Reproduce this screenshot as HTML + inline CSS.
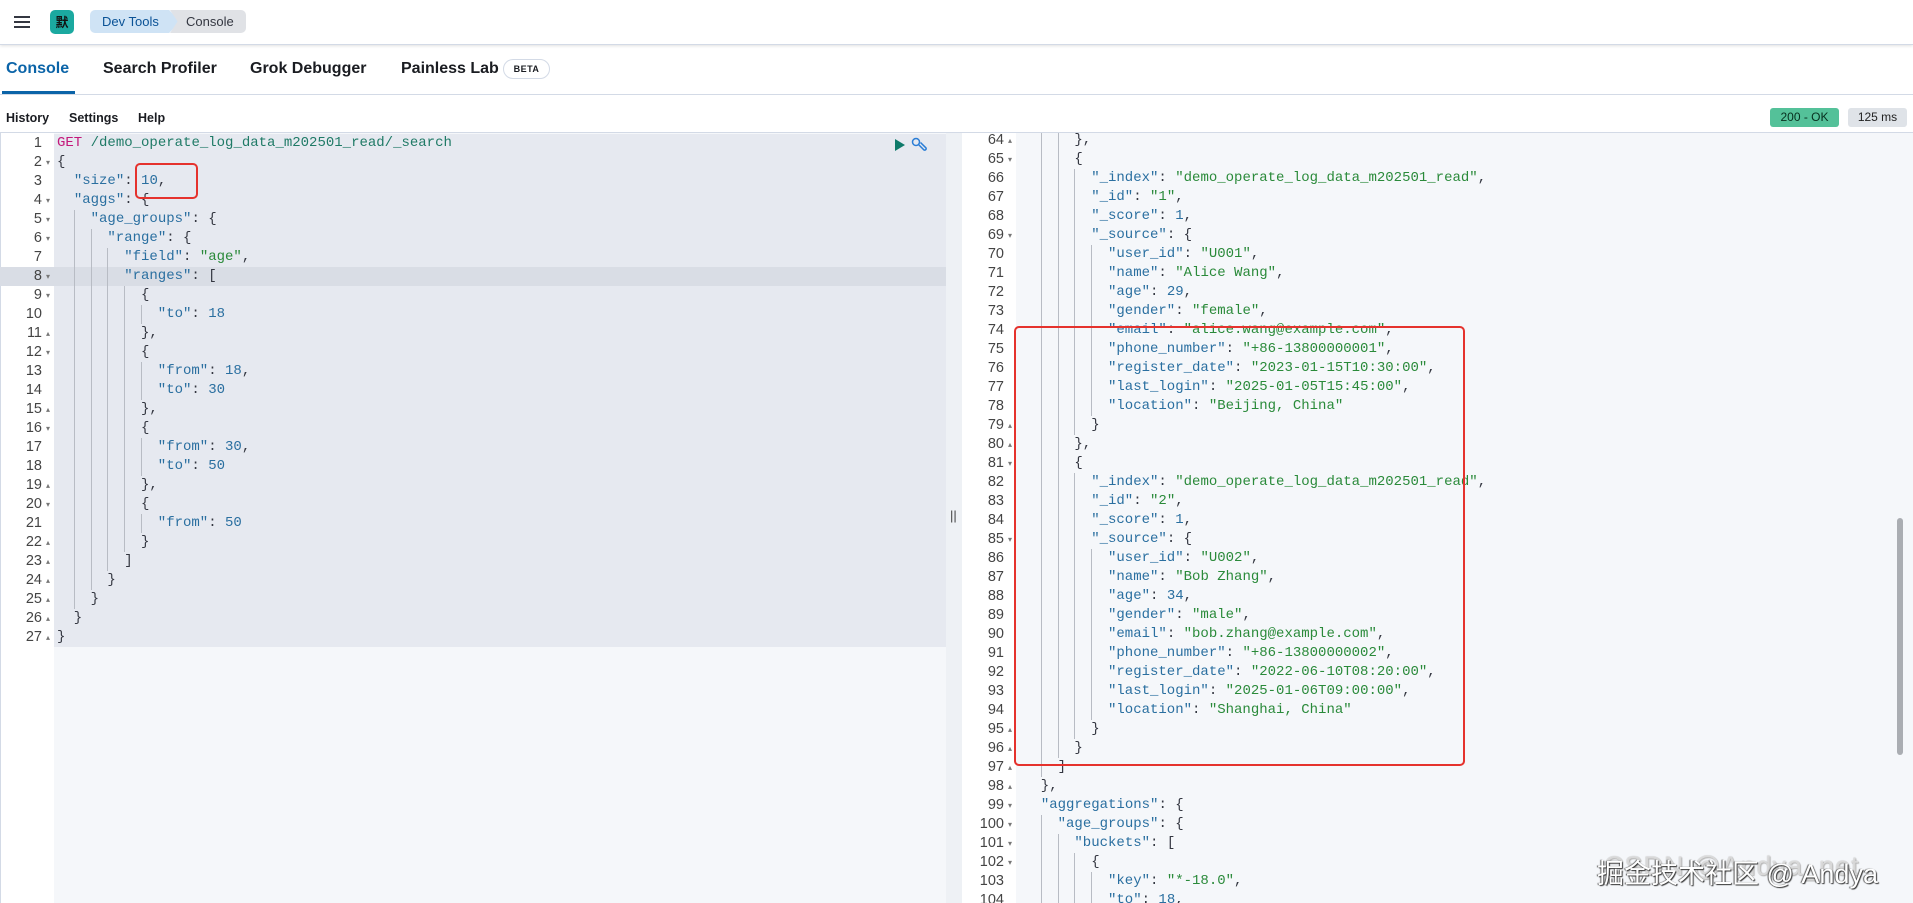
<!DOCTYPE html>
<html><head><meta charset="utf-8">
<style>
*{box-sizing:border-box;margin:0;padding:0}
html,body{width:1913px;height:903px;overflow:hidden;background:#fff;font-family:"Liberation Sans",sans-serif;color:#1a1c21;position:relative}
.hdr{position:absolute;left:0;top:0;width:1913px;height:45px;background:#fff;border-bottom:1px solid #d3dae6;box-shadow:0 1px 3px rgba(0,0,0,.12)}
.burger{position:absolute;left:14px;top:16px;width:16px;height:13px}
.burger span{position:absolute;left:0;width:16px;height:2px;background:#343741}
.logo{position:absolute;left:50px;top:10px;width:24px;height:24px;border-radius:5px;background:#1ba9a0;color:#111;font:bold 13px "Noto Sans CJK SC",sans-serif;text-align:center;line-height:24px}
.bc1{position:absolute;left:90px;top:10px;height:23px;width:90px;background:#cfe3f5;color:#0a5296;font-size:13px;line-height:23px;padding-left:12px;border-radius:5px 0 0 5px;clip-path:polygon(0 0,88% 0,100% 50%,88% 100%,0 100%)}
.bc2{position:absolute;left:170px;top:10px;height:23px;width:76px;background:#e0e2e6;color:#343741;font-size:13px;line-height:23px;padding-left:16px;border-radius:0 5px 5px 0;clip-path:polygon(0 0,100% 0,100% 100%,0 100%,10% 50%)}
.tabs{position:absolute;left:0;top:46px;width:1913px;height:49px;border-bottom:1px solid #d3dae6}
.tab{position:absolute;top:14px;font-weight:bold;font-size:16px;color:#1a1c21}
.tab.on{color:#0b64a8}
.uline{position:absolute;left:2px;top:45px;width:73px;height:3px;background:#0b64a8}
.beta{position:absolute;left:503px;top:13px;width:47px;height:20px;border:1px solid #d3dae6;border-radius:10px;font-size:9px;font-weight:bold;text-align:center;line-height:18px;letter-spacing:.5px}
.menu{position:absolute;top:111px;font-size:12.5px;font-weight:bold}
.badge{position:absolute;top:108px;height:19px;font-size:12px;line-height:19px;text-align:center;border-radius:3px}
.ed{position:absolute;top:133px;height:770px;overflow:hidden;font-family:"Liberation Mono",monospace;font-size:14px}
.ln{height:19px;line-height:19px;white-space:pre;position:relative}
.g{position:absolute;left:0;width:53px;text-align:right;padding-right:11px;color:#444;font-family:"Liberation Sans",sans-serif;font-size:14.5px}
.g b{position:absolute;right:3px;top:0;font-size:8px;color:#777;font-weight:normal}
.c{position:absolute;white-space:pre;color:#343741}
i{display:inline-block;width:16.8px;height:19px;border-left:1px solid #b8bcc4;vertical-align:top}
.k{color:#2a6fa0}.s{color:#2a8a3a}.n{color:#2a6fa0}.m{color:#c4177a}.u{color:#1f7a66}
.red{position:absolute;border:2px solid #e5322d;border-radius:5px}
</style></head><body>
<div class="hdr">
 <div class="burger"><span style="top:0"></span><span style="top:5px"></span><span style="top:10px"></span></div>
 <div class="logo">默</div>
 <div class="bc1">Dev Tools</div>
 <div class="bc2">Console</div>
</div>
<div class="tabs">
 <div class="tab on" style="left:6px">Console</div>
 <div class="tab" style="left:103px">Search Profiler</div>
 <div class="tab" style="left:250px">Grok Debugger</div>
 <div class="tab" style="left:401px">Painless Lab</div>
 <div class="beta">BETA</div>
 <div class="uline"></div>
</div>
<div class="menu" style="left:6px">History</div>
<div class="menu" style="left:69px">Settings</div>
<div class="menu" style="left:138px">Help</div>
<div class="badge" style="left:1770px;width:69px;background:#54c199;color:#07301f">200 - OK</div>
<div class="badge" style="left:1848px;width:59px;background:#dfe3e8;color:#222">125 ms</div>
<div style="position:absolute;left:0;top:132px;width:1913px;height:1px;background:#d3dae6"></div>

<!-- LEFT EDITOR -->
<div class="ed" style="left:0;width:946px;background:#f5f7fa">
 <div style="position:absolute;left:0;top:0;width:54px;height:770px;background:#fff;border-left:1px solid #d3dae6"></div>
 <div style="position:absolute;left:54px;top:1px;width:892px;height:513px;background:#e6e9f0"></div>
 <div style="position:absolute;left:0;top:134px;width:946px;height:19px;background:#d9dde5"></div>
 <div style="position:absolute;top:1px;left:0;width:946px">
<div class="ln"><span class="g">1</span><span class="c" style="left:57px"><span class="m">GET</span> <span class="u">/demo_operate_log_data_m202501_read/_search</span></span></div>
<div class="ln"><span class="g">2<b>▾</b></span><span class="c" style="left:57px">{</span></div>
<div class="ln"><span class="g">3</span><span class="c" style="left:57px">  <span class="k">"size"</span>: <span class="n">10</span>,</span></div>
<div class="ln"><span class="g">4<b>▾</b></span><span class="c" style="left:57px">  <span class="k">"aggs"</span>: {</span></div>
<div class="ln"><span class="g">5<b>▾</b></span><span class="c" style="left:57px">  <i></i><span class="k">"age_groups"</span>: {</span></div>
<div class="ln"><span class="g">6<b>▾</b></span><span class="c" style="left:57px">  <i></i><i></i><span class="k">"range"</span>: {</span></div>
<div class="ln"><span class="g">7</span><span class="c" style="left:57px">  <i></i><i></i><i></i><span class="k">"field"</span>: <span class="s">"age"</span>,</span></div>
<div class="ln"><span class="g">8<b>▾</b></span><span class="c" style="left:57px">  <i></i><i></i><i></i><span class="k">"ranges"</span>: [</span></div>
<div class="ln"><span class="g">9<b>▾</b></span><span class="c" style="left:57px">  <i></i><i></i><i></i><i></i>{</span></div>
<div class="ln"><span class="g">10</span><span class="c" style="left:57px">  <i></i><i></i><i></i><i></i><i></i><span class="k">"to"</span>: <span class="n">18</span></span></div>
<div class="ln"><span class="g">11<b>▴</b></span><span class="c" style="left:57px">  <i></i><i></i><i></i><i></i>},</span></div>
<div class="ln"><span class="g">12<b>▾</b></span><span class="c" style="left:57px">  <i></i><i></i><i></i><i></i>{</span></div>
<div class="ln"><span class="g">13</span><span class="c" style="left:57px">  <i></i><i></i><i></i><i></i><i></i><span class="k">"from"</span>: <span class="n">18</span>,</span></div>
<div class="ln"><span class="g">14</span><span class="c" style="left:57px">  <i></i><i></i><i></i><i></i><i></i><span class="k">"to"</span>: <span class="n">30</span></span></div>
<div class="ln"><span class="g">15<b>▴</b></span><span class="c" style="left:57px">  <i></i><i></i><i></i><i></i>},</span></div>
<div class="ln"><span class="g">16<b>▾</b></span><span class="c" style="left:57px">  <i></i><i></i><i></i><i></i>{</span></div>
<div class="ln"><span class="g">17</span><span class="c" style="left:57px">  <i></i><i></i><i></i><i></i><i></i><span class="k">"from"</span>: <span class="n">30</span>,</span></div>
<div class="ln"><span class="g">18</span><span class="c" style="left:57px">  <i></i><i></i><i></i><i></i><i></i><span class="k">"to"</span>: <span class="n">50</span></span></div>
<div class="ln"><span class="g">19<b>▴</b></span><span class="c" style="left:57px">  <i></i><i></i><i></i><i></i>},</span></div>
<div class="ln"><span class="g">20<b>▾</b></span><span class="c" style="left:57px">  <i></i><i></i><i></i><i></i>{</span></div>
<div class="ln"><span class="g">21</span><span class="c" style="left:57px">  <i></i><i></i><i></i><i></i><i></i><span class="k">"from"</span>: <span class="n">50</span></span></div>
<div class="ln"><span class="g">22<b>▴</b></span><span class="c" style="left:57px">  <i></i><i></i><i></i><i></i>}</span></div>
<div class="ln"><span class="g">23<b>▴</b></span><span class="c" style="left:57px">  <i></i><i></i><i></i>]</span></div>
<div class="ln"><span class="g">24<b>▴</b></span><span class="c" style="left:57px">  <i></i><i></i>}</span></div>
<div class="ln"><span class="g">25<b>▴</b></span><span class="c" style="left:57px">  <i></i>}</span></div>
<div class="ln"><span class="g">26<b>▴</b></span><span class="c" style="left:57px">  }</span></div>
<div class="ln"><span class="g">27<b>▴</b></span><span class="c" style="left:57px">}</span></div>
 </div>
 <svg style="position:absolute;left:893px;top:3px" width="40" height="18" viewBox="0 0 40 18"><path d="M2 3 L12 9 L2 15 Z" fill="#0e7a6a"/><g fill="none" stroke="#2a7dd6" stroke-width="1.5"><circle cx="23" cy="6" r="3.5"/><path d="M25.5 8.5 L31 14 a1.5 1.5 0 0 0 2 -2 L27.5 6.5"/></g></svg>
</div>
<div class="red" style="left:135px;top:163px;width:63px;height:36px"></div>

<!-- DIVIDER -->
<div style="position:absolute;left:946px;top:133px;width:16px;height:770px;background:#eef1f5"></div>
<div style="position:absolute;left:950px;top:508px;font-size:13px;color:#444">||</div>

<!-- RIGHT EDITOR -->
<div class="ed" style="left:962px;width:951px;background:#f5f7fa">
 <div style="position:absolute;left:0;top:0;width:54px;height:770px;background:#fff"></div>
 <div style="position:absolute;left:935px;top:385px;width:6px;height:237px;border-radius:3px;background:#aaadb2"></div>
 <div style="position:absolute;top:-2px;left:0;width:935px">
<div class="ln"><span class="g">64<b>▴</b></span><span class="c" style="left:62px">  <i></i><i></i>},</span></div>
<div class="ln"><span class="g">65<b>▾</b></span><span class="c" style="left:62px">  <i></i><i></i>{</span></div>
<div class="ln"><span class="g">66</span><span class="c" style="left:62px">  <i></i><i></i><i></i><span class="k">"_index"</span>: <span class="s">"demo_operate_log_data_m202501_read"</span>,</span></div>
<div class="ln"><span class="g">67</span><span class="c" style="left:62px">  <i></i><i></i><i></i><span class="k">"_id"</span>: <span class="s">"1"</span>,</span></div>
<div class="ln"><span class="g">68</span><span class="c" style="left:62px">  <i></i><i></i><i></i><span class="k">"_score"</span>: <span class="n">1</span>,</span></div>
<div class="ln"><span class="g">69<b>▾</b></span><span class="c" style="left:62px">  <i></i><i></i><i></i><span class="k">"_source"</span>: {</span></div>
<div class="ln"><span class="g">70</span><span class="c" style="left:62px">  <i></i><i></i><i></i><i></i><span class="k">"user_id"</span>: <span class="s">"U001"</span>,</span></div>
<div class="ln"><span class="g">71</span><span class="c" style="left:62px">  <i></i><i></i><i></i><i></i><span class="k">"name"</span>: <span class="s">"Alice Wang"</span>,</span></div>
<div class="ln"><span class="g">72</span><span class="c" style="left:62px">  <i></i><i></i><i></i><i></i><span class="k">"age"</span>: <span class="n">29</span>,</span></div>
<div class="ln"><span class="g">73</span><span class="c" style="left:62px">  <i></i><i></i><i></i><i></i><span class="k">"gender"</span>: <span class="s">"female"</span>,</span></div>
<div class="ln"><span class="g">74</span><span class="c" style="left:62px">  <i></i><i></i><i></i><i></i><span class="k">"email"</span>: <span class="s">"alice.wang@example.com"</span>,</span></div>
<div class="ln"><span class="g">75</span><span class="c" style="left:62px">  <i></i><i></i><i></i><i></i><span class="k">"phone_number"</span>: <span class="s">"+86-13800000001"</span>,</span></div>
<div class="ln"><span class="g">76</span><span class="c" style="left:62px">  <i></i><i></i><i></i><i></i><span class="k">"register_date"</span>: <span class="s">"2023-01-15T10:30:00"</span>,</span></div>
<div class="ln"><span class="g">77</span><span class="c" style="left:62px">  <i></i><i></i><i></i><i></i><span class="k">"last_login"</span>: <span class="s">"2025-01-05T15:45:00"</span>,</span></div>
<div class="ln"><span class="g">78</span><span class="c" style="left:62px">  <i></i><i></i><i></i><i></i><span class="k">"location"</span>: <span class="s">"Beijing, China"</span></span></div>
<div class="ln"><span class="g">79<b>▴</b></span><span class="c" style="left:62px">  <i></i><i></i><i></i>}</span></div>
<div class="ln"><span class="g">80<b>▴</b></span><span class="c" style="left:62px">  <i></i><i></i>},</span></div>
<div class="ln"><span class="g">81<b>▾</b></span><span class="c" style="left:62px">  <i></i><i></i>{</span></div>
<div class="ln"><span class="g">82</span><span class="c" style="left:62px">  <i></i><i></i><i></i><span class="k">"_index"</span>: <span class="s">"demo_operate_log_data_m202501_read"</span>,</span></div>
<div class="ln"><span class="g">83</span><span class="c" style="left:62px">  <i></i><i></i><i></i><span class="k">"_id"</span>: <span class="s">"2"</span>,</span></div>
<div class="ln"><span class="g">84</span><span class="c" style="left:62px">  <i></i><i></i><i></i><span class="k">"_score"</span>: <span class="n">1</span>,</span></div>
<div class="ln"><span class="g">85<b>▾</b></span><span class="c" style="left:62px">  <i></i><i></i><i></i><span class="k">"_source"</span>: {</span></div>
<div class="ln"><span class="g">86</span><span class="c" style="left:62px">  <i></i><i></i><i></i><i></i><span class="k">"user_id"</span>: <span class="s">"U002"</span>,</span></div>
<div class="ln"><span class="g">87</span><span class="c" style="left:62px">  <i></i><i></i><i></i><i></i><span class="k">"name"</span>: <span class="s">"Bob Zhang"</span>,</span></div>
<div class="ln"><span class="g">88</span><span class="c" style="left:62px">  <i></i><i></i><i></i><i></i><span class="k">"age"</span>: <span class="n">34</span>,</span></div>
<div class="ln"><span class="g">89</span><span class="c" style="left:62px">  <i></i><i></i><i></i><i></i><span class="k">"gender"</span>: <span class="s">"male"</span>,</span></div>
<div class="ln"><span class="g">90</span><span class="c" style="left:62px">  <i></i><i></i><i></i><i></i><span class="k">"email"</span>: <span class="s">"bob.zhang@example.com"</span>,</span></div>
<div class="ln"><span class="g">91</span><span class="c" style="left:62px">  <i></i><i></i><i></i><i></i><span class="k">"phone_number"</span>: <span class="s">"+86-13800000002"</span>,</span></div>
<div class="ln"><span class="g">92</span><span class="c" style="left:62px">  <i></i><i></i><i></i><i></i><span class="k">"register_date"</span>: <span class="s">"2022-06-10T08:20:00"</span>,</span></div>
<div class="ln"><span class="g">93</span><span class="c" style="left:62px">  <i></i><i></i><i></i><i></i><span class="k">"last_login"</span>: <span class="s">"2025-01-06T09:00:00"</span>,</span></div>
<div class="ln"><span class="g">94</span><span class="c" style="left:62px">  <i></i><i></i><i></i><i></i><span class="k">"location"</span>: <span class="s">"Shanghai, China"</span></span></div>
<div class="ln"><span class="g">95<b>▴</b></span><span class="c" style="left:62px">  <i></i><i></i><i></i>}</span></div>
<div class="ln"><span class="g">96<b>▴</b></span><span class="c" style="left:62px">  <i></i><i></i>}</span></div>
<div class="ln"><span class="g">97<b>▴</b></span><span class="c" style="left:62px">  <i></i>]</span></div>
<div class="ln"><span class="g">98<b>▴</b></span><span class="c" style="left:62px">  },</span></div>
<div class="ln"><span class="g">99<b>▾</b></span><span class="c" style="left:62px">  <span class="k">"aggregations"</span>: {</span></div>
<div class="ln"><span class="g">100<b>▾</b></span><span class="c" style="left:62px">  <i></i><span class="k">"age_groups"</span>: {</span></div>
<div class="ln"><span class="g">101<b>▾</b></span><span class="c" style="left:62px">  <i></i><i></i><span class="k">"buckets"</span>: [</span></div>
<div class="ln"><span class="g">102<b>▾</b></span><span class="c" style="left:62px">  <i></i><i></i><i></i>{</span></div>
<div class="ln"><span class="g">103</span><span class="c" style="left:62px">  <i></i><i></i><i></i><i></i><span class="k">"key"</span>: <span class="s">"*-18.0"</span>,</span></div>
<div class="ln"><span class="g">104</span><span class="c" style="left:62px">  <i></i><i></i><i></i><i></i><span class="k">"to"</span>: <span class="n">18</span>,</span></div>
 </div>
</div>
<div class="red" style="left:1014px;top:326px;width:451px;height:440px"></div>

<!-- watermark -->
<div style="position:absolute;left:1604px;top:851px;font:27px 'Liberation Sans',sans-serif;color:rgba(255,255,255,.6);text-shadow:0 0 1px #999,1px 1px 1px #bbb;letter-spacing:1px">CSDN @Andya_net</div>
<div style="position:absolute;left:1597px;top:852px;font:27px 'Liberation Sans','Noto Sans CJK SC',sans-serif;color:#fff;text-shadow:1px 1px 1px #333,-1px 0 1px #555">掘金技术社区 @ Andya</div>
</body></html>
